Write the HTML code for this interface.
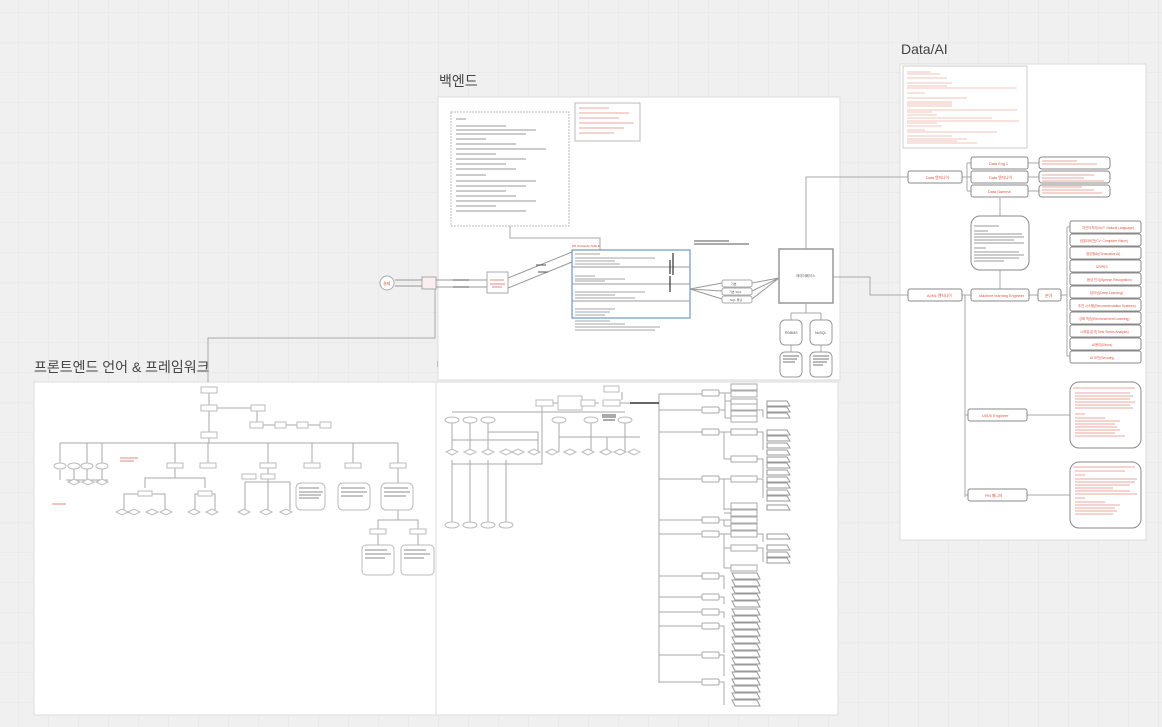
<!DOCTYPE html>
<html><head><meta charset="utf-8"><style>
html,body{margin:0;padding:0;width:1162px;height:727px;overflow:hidden;background:#f0f0f0}
svg{display:block}
.t{font-family:"Liberation Sans","Noto Sans CJK KR",sans-serif}
</style></head><body>
<svg width="1162" height="727" viewBox="0 0 1162 727" xmlns="http://www.w3.org/2000/svg" class="t">
<defs>
<pattern id="g" width="30" height="30" patternUnits="userSpaceOnUse" x="18" y="12">
<path d="M0 0H30M0 0V30" stroke="#e5e5e5" stroke-width="1" fill="none"/>
</pattern>
</defs>
<rect width="1162" height="727" fill="#f0f0f0"/>
<rect width="1162" height="727" fill="url(#g)"/>

<text x="439" y="86" font-size="14" fill="#444">백엔드</text>
<text x="901" y="54" font-size="14" fill="#444">Data/AI</text>
<text x="34" y="372" font-size="14" fill="#444">프론트엔드 언어 &amp; 프레임워크</text>
<text x="436" y="372" font-size="14" fill="#444">백엔드 언어 &amp; 프레임워크</text>

<rect x="438" y="97" width="402" height="283" fill="#fff" stroke="#ddd"/>
<rect x="34" y="382" width="402" height="333" fill="#fff" stroke="#ddd"/>
<rect x="436" y="382" width="402" height="333" fill="#fff" stroke="#ddd"/>
<rect x="900" y="64" width="246" height="476" fill="#fff" stroke="#ddd"/>

<g stroke="#aaa" fill="none" stroke-width="1">
<path d="M435 289V338H208V382"/>
<path d="M806 249V177H908"/>
<path d="M833 277H870V295H908"/>
</g>

<rect x="451" y="112" width="118" height="114" fill="#fff" stroke="#bbb" stroke-dasharray="2 1"/>
<g stroke="#777" stroke-width="0.8">
<path d="M456 119h10M456 126h50M456 130h80M456 134h70M456 139h30M456 144h60M456 149h90M456 154h40M456 159h70M456 164h50M456 169h60M456 175h30M456 181h80M456 186h70M456 191h50M456 196h60M456 201h80M456 206h40M456 211h70"/>
</g>
<path d="M510 226V238H600V250" stroke="#aaa" fill="none"/>
<rect x="575" y="103" width="65" height="38" fill="#fff" stroke="#bbb"/>
<g stroke="#e58a7c" stroke-width="0.8"><path d="M579 108h30M579 113h50M579 118h40M579 123h55M579 128h45M579 133h35"/></g>
<circle cx="387" cy="283" r="7" fill="#fff" stroke="#aaa"/>
<text x="383" y="285" font-size="4" fill="#e0533f">결제</text>
<rect x="422" y="277" width="14" height="12" fill="#fbeeee" stroke="#aaa"/>
<rect x="487" y="272" width="21" height="21" fill="#fff" stroke="#aaa"/>
<g stroke="#e58a7c"><path d="M490 280h14M490 284h15M492 287h10"/></g>
<g stroke="#999" fill="none">
<path d="M395 280h27M395 286h27M436 280h51M436 287h51M508 278l64-26M508 288l64-26"/>
<path d="M690 289l32-6M690 289l32 2M690 289l32 10M752 283l27-5M752 291l27-13M752 299l27-21"/>
</g>
<g stroke="#555"><path d="M453 280h16M453 287h16M536 265h10M538 272h10"/></g>
<text x="572" y="247" font-size="3" fill="#e0533f">DB SCHEMA TABLE</text>
<rect x="572" y="250" width="118" height="68" fill="#fff" stroke="#6a9ac4" stroke-width="1.2"/>
<g stroke="#999"><path d="M572 267h118M572 284h118M572 301h118"/></g>
<g stroke="#888" stroke-width="0.8"><path d="M575 254h25M575 258h80M575 261h40M575 264h45M575 276h20M575 279h50M575 281h30M575 292h70M575 295h40M575 298h60M575 309h40M575 312h35M575 315h30M575 321h35M575 324h50M575 327h85M575 330h80"/></g>
<g stroke="#333" stroke-width="1.2"><path d="M670 260v14M673 253v22M670 276v16"/></g>
<g stroke="#555"><path d="M694 241h35M694 244h55"/></g>
<rect x="722" y="280" width="30" height="7" rx="2" fill="#fff" stroke="#aaa"/>
<rect x="722" y="288" width="30" height="7" rx="2" fill="#fff" stroke="#aaa"/>
<rect x="722" y="296" width="30" height="7" rx="2" fill="#fff" stroke="#aaa"/>
<text x="731" y="285" font-size="3" fill="#555">기본</text><text x="729" y="293" font-size="3" fill="#555">기본 SQL</text><text x="730" y="301" font-size="3" fill="#555">SQL 튜닝</text>
<rect x="779" y="249" width="54" height="54" fill="#fff" stroke="#999" stroke-width="1.5"/>
<text x="796" y="277" font-size="3.5" fill="#555">데이터베이스</text>
<path d="M806 303V313M791 313H821M791 313V320M821 313V320M791 345V352M821 345V352" stroke="#aaa" fill="none"/>
<rect x="780" y="320" width="22" height="25" rx="5" fill="#fff" stroke="#999"/>
<rect x="810" y="320" width="22" height="25" rx="5" fill="#fff" stroke="#999"/>
<text x="785" y="334" font-size="3.5" fill="#555">RDBMS</text><text x="815" y="334" font-size="3.5" fill="#555">NoSQL</text>
<rect x="780" y="352" width="22" height="25" rx="5" fill="#fff" stroke="#999"/>
<rect x="810" y="352" width="22" height="25" rx="5" fill="#fff" stroke="#999"/>
<g stroke="#777"><path d="M783 356h16M783 359h14M783 362h12M813 356h16M813 359h16M813 362h14M813 365h10"/></g>

<rect x="903" y="66" width="124" height="82" fill="#fff" stroke="#ccc"/>
<g stroke="#e58a7c" stroke-width="0.6"><path d="M907 72h24M907 74h33M907 78h40M907 83h45M907 86h40M907 88h110M907 93h18M907 98h60M907 102h45M907 104h45M907 106h45M907 110h110M907 112h25M907 115h30M907 118h85M907 121h112M907 123h30M907 126h35M907 130h18M907 132h90M907 136h45M907 139h60M907 141h50M907 143h70"/></g>
<g stroke="#aaa" fill="none">
<path d="M962 177h5M967 163v28M967 163h4M967 177h4M967 191h4M1028 163h11M1028 177h11M1028 191h11"/>
<path d="M1000 198v91M962 295h9M1029 295h9M1061 295h6M1067 227v129M1067 227h3M1067 356h3"/>
<path d="M965 295v202M965 415h3M965 495h3M1027 415h43M1027 495h43"/>
</g>
<g fill="#fff" stroke="#888">
<rect x="908" y="171" width="54" height="12" rx="2"/>
<rect x="971" y="157" width="57" height="12" rx="2"/>
<rect x="971" y="171" width="57" height="12" rx="2"/>
<rect x="971" y="185" width="57" height="12" rx="2"/>
<rect x="1039" y="157" width="71" height="12" rx="3"/>
<rect x="1039" y="171" width="71" height="12" rx="3"/>
<rect x="1039" y="185" width="71" height="12" rx="3"/>
<rect x="971" y="216" width="58" height="54" rx="9"/>
<rect x="908" y="289" width="54" height="12" rx="2"/>
<rect x="971" y="289" width="58" height="12" rx="2"/>
<rect x="1038" y="289" width="23" height="12" rx="2"/>
<rect x="968" y="409" width="59" height="12" rx="2"/>
<rect x="968" y="489" width="59" height="12" rx="2"/>
<rect x="1070" y="382" width="71" height="66" rx="9"/>
<rect x="1070" y="462" width="71" height="66" rx="9"/>
</g>
<g font-size="3.8" fill="#e0533f">
<text x="926" y="179">Data 엔지니어</text>
<text x="989" y="165">Data Eng 1</text>
<text x="989" y="179">Data 엔지니어</text>
<text x="988" y="193">Data Gamma</text>
<text x="927" y="297">AI/ML 엔지니어</text>
<text x="979" y="297">Machine learning Engineer</text>
<text x="1045" y="297">분야</text>
<text x="982" y="417">UI/UX Engineer</text>
<text x="985" y="497">PM 매니저</text>
</g>
<g stroke="#e58a7c" stroke-width="0.7"><path d="M1042 161h35M1042 164h55M1042 175h52M1042 178h42M1042 181h62M1042 187h40M1042 190h52M1042 193h60"/></g>
<g stroke="#777" stroke-width="0.8"><path d="M974 226h25M974 231h14M974 234h48M974 237h50M974 240h40M974 243h50M974 248h12M974 252h45M974 255h50M974 258h45M974 261h30"/></g>
<g fill="#fff" stroke="#888">
<rect x="1070" y="221" width="71" height="12" rx="2"/><rect x="1070" y="234" width="71" height="12" rx="2"/>
<rect x="1070" y="247" width="71" height="12" rx="2"/><rect x="1070" y="260" width="71" height="12" rx="2"/>
<rect x="1070" y="273" width="71" height="12" rx="2"/><rect x="1070" y="286" width="71" height="12" rx="2"/>
<rect x="1070" y="299" width="71" height="12" rx="2"/><rect x="1070" y="312" width="71" height="12" rx="2"/>
<rect x="1070" y="325" width="71" height="12" rx="2"/><rect x="1070" y="338" width="71" height="12" rx="2"/>
<rect x="1070" y="351" width="71" height="12" rx="2"/>
</g>
<g font-size="3.3" fill="#e0533f">
<text x="1082" y="229">자연어처리(NLP: Natural Language)</text>
<text x="1080" y="242">컴퓨터비전(CV: Computer Vision)</text>
<text x="1086" y="255">생성형AI(Generative AI)</text>
<text x="1096" y="268">로보틱스</text>
<text x="1087" y="281">음성 인식(Speech Recognition)</text>
<text x="1090" y="294">딥러닝(Deep Learning)</text>
<text x="1078" y="307">추천 시스템(Recommendation Systems)</text>
<text x="1079" y="320">강화 학습(Reinforcement Learning)</text>
<text x="1080" y="333">시계열 분석(Time Series Analysis)</text>
<text x="1092" y="346">AI윤리(Ethics)</text>
<text x="1090" y="359">AI 보안(Security)</text>
</g>
<g stroke="#e58a7c" stroke-width="0.7"><path d="M1073 388h62M1075 393h55M1075 396h58M1075 399h55M1075 402h60M1075 405h55M1075 408h58M1075 414h10M1075 418h30M1075 421h45M1075 424h40M1075 427h42M1075 430h45M1075 433h40M1075 436h50M1073 467h62M1075 471h50M1075 475h10M1075 479h62M1075 482h60M1075 485h55M1075 488h38M1075 491h55M1075 494h62M1075 498h10M1075 502h30M1075 505h45M1075 508h40M1075 511h42M1075 514h38"/></g>

<g stroke="#aaa" fill="none">
<path d="M659 394V683"/>
<path d="M659 394h43M659 410h43M659 432h43M659 479h43M659 520h43M659 534h43M659 576h43M659 597h43M659 612h43M659 626h43M659 655h43M659 682h43"/>
<path d="M719 393h6V409M725 393h6M725 401h6M719 410h6M725 404v14M725 418h6M719 432h5V459M724 432h7M724 459h7M719 479h5V510M724 479h7M724 509h7M724 513h7"/>
<path d="M719 520h5V526M724 520h7M724 526h7M719 534h5V568M724 534h7M724 548h7M724 568h7"/>
<path d="M719 576h5V589M719 597h5V604M719 612h5V618M719 626h5V653M719 655h5V676M719 682h5V705"/>
<path d="M757 410h6V417M757 432h6V450M757 459h6V478M757 479h6V498M757 534h6V542M757 548h6V562"/>
</g>
<g fill="#fff" stroke="#aaa">
<rect x="702" y="390" width="17" height="6" rx="1"/><rect x="702" y="407" width="17" height="6" rx="1"/>
<rect x="702" y="429" width="17" height="6" rx="1"/><rect x="702" y="476" width="17" height="6" rx="1"/>
<rect x="702" y="517" width="17" height="6" rx="1"/><rect x="702" y="531" width="17" height="6" rx="1"/>
<rect x="702" y="573" width="17" height="6" rx="1"/><rect x="702" y="594" width="17" height="6" rx="1"/>
<rect x="702" y="609" width="17" height="6" rx="1"/><rect x="702" y="623" width="17" height="6" rx="1"/>
<rect x="702" y="652" width="17" height="6" rx="1"/><rect x="702" y="679" width="17" height="6" rx="1"/>
<rect x="731" y="384" width="26" height="6"/><rect x="731" y="391" width="26" height="6"/><rect x="731" y="399" width="26" height="6"/><rect x="731" y="404" width="26" height="6"/><rect x="731" y="411" width="26" height="6"/><rect x="731" y="416" width="26" height="6"/>
<rect x="731" y="429" width="26" height="6"/><rect x="731" y="456" width="26" height="6"/>
<rect x="731" y="476" width="26" height="6"/><rect x="731" y="503" width="26" height="6"/><rect x="731" y="510" width="26" height="6"/>
<rect x="731" y="517" width="26" height="6"/><rect x="731" y="524" width="26" height="6"/>
<rect x="731" y="531" width="26" height="6"/><rect x="731" y="545" width="26" height="6"/><rect x="731" y="565" width="26" height="6"/>
</g>
<g fill="#fff" stroke="#999">
<path d="M732 573h25l3 6h-25zM732 580h25l3 6h-25zM732 587h25l3 6h-25zM732 594h25l3 6h-25zM732 601h25l3 6h-25zM732 609h25l3 6h-25zM732 616h25l3 6h-25zM732 623h25l3 6h-25zM732 630h25l3 6h-25zM732 637h25l3 6h-25zM732 644h25l3 6h-25zM732 651h25l3 6h-25zM732 658h25l3 6h-25zM732 665h25l3 6h-25zM732 672h25l3 6h-25zM732 679h25l3 6h-25zM732 686h25l3 6h-25zM732 693h25l3 6h-25zM732 700h25l3 6h-25z"/>
<path d="M767 401h20l3 5h-23zM767 407h20l3 5h-23zM767 413h20l3 5h-23zM767 430h20l3 5h-23zM767 436h20l3 5h-23zM767 443h20l3 5h-23zM767 450h20l3 5h-23zM767 457h20l3 5h-23zM767 463h20l3 5h-23zM767 470h20l3 5h-23zM767 477h20l3 5h-23zM767 483h20l3 5h-23zM767 490h20l3 5h-23zM767 496h20l3 5h-23zM767 505h20l3 5h-23zM767 534h20l3 5h-23zM767 545h20l3 5h-23zM767 552h20l3 5h-23zM767 558h20l3 5h-23z"/>
</g>
<g stroke="#aaa" fill="none">
<path d="M452 412H625M452 420V452M470 420V452M488 420V452M559 420V452M591 420V452M625 420V452M452 440H538M559 437H640M488 432H538V452M607 437V452"/>
<path d="M452 460V525M470 460V525M488 460V525M506 460V525M452 464H542V402"/>
<path d="M553 403h12M587 403h12M618 403h12M622 392V400"/>
</g>
<path d="M630 403H659" stroke="#333" stroke-width="1.5"/>
<g fill="#fff" stroke="#bbb">
<rect x="536" y="400" width="17" height="6"/><rect x="558" y="396" width="24" height="14"/><rect x="581" y="400" width="14" height="6"/>
<rect x="603" y="400" width="17" height="6"/><rect x="604" y="386" width="15" height="6"/>
<ellipse cx="452" cy="420" rx="7" ry="3"/><ellipse cx="470" cy="420" rx="7" ry="3"/><ellipse cx="488" cy="420" rx="7" ry="3"/>
<ellipse cx="559" cy="420" rx="7" ry="3"/><ellipse cx="591" cy="420" rx="7" ry="3"/><ellipse cx="625" cy="420" rx="7" ry="3"/>
<ellipse cx="452" cy="525" rx="7" ry="3"/><ellipse cx="470" cy="525" rx="7" ry="3"/><ellipse cx="488" cy="525" rx="7" ry="3"/><ellipse cx="506" cy="525" rx="7" ry="3"/>
</g>
<g fill="#fff" stroke="#bbb">
<path d="M446 452l6-3 6 3-6 3zM464 452l6-3 6 3-6 3zM482 452l6-3 6 3-6 3zM500 452l6-3 6 3-6 3zM512 452l6-3 6 3-6 3zM528 452l6-3 6 3-6 3zM546 452l6-3 6 3-6 3zM564 452l6-3 6 3-6 3zM582 452l6-3 6 3-6 3zM600 452l6-3 6 3-6 3zM614 452l6-3 6 3-6 3zM628 452l6-3 6 3-6 3z"/>
</g>
<g stroke="#555"><path d="M602 415h14M602 417h14M603 420h12"/></g>

<g stroke="#aaa" fill="none">
<path d="M209 393V405M215 408H251M257 411V422M263 425H275M286 425H297M308 425H320M209 411V432M209 438V443M60 443H398"/>
<path d="M60 443V463M87 443V463M102 443V463M175 443V463M208 443V463M268 443V463M312 443V463M353 443V463M398 443V463"/>
<path d="M74 467V480M87 467V480M102 467V480M60 470V480M66 480H108"/>
<path d="M175 468V478H145V488M175 478H205V488M145 494H124V510M145 494H165V510M205 494H195V510M205 494H215V510"/>
<path d="M268 468V482M245 482H290M245 482V510M268 482V510M290 482V510"/>
<path d="M398 468V520H378V545M398 520H418V545"/>
</g>
<g fill="#fff" stroke="#bbb">
<rect x="201" y="387" width="16" height="6"/><rect x="201" y="405" width="16" height="6"/><rect x="251" y="405" width="14" height="6"/>
<rect x="250" y="422" width="13" height="6"/><rect x="275" y="422" width="11" height="6"/><rect x="297" y="422" width="11" height="6"/><rect x="320" y="422" width="11" height="6"/>
<rect x="201" y="432" width="16" height="6"/>
<ellipse cx="60" cy="466" rx="6" ry="3"/><ellipse cx="74" cy="466" rx="6" ry="3"/><ellipse cx="87" cy="466" rx="6" ry="3"/><ellipse cx="102" cy="466" rx="6" ry="3"/>
<rect x="167" y="463" width="16" height="5"/><rect x="200" y="463" width="16" height="5"/><rect x="260" y="463" width="16" height="5"/><rect x="304" y="463" width="16" height="5"/><rect x="345" y="463" width="16" height="5"/><rect x="390" y="463" width="16" height="5"/>
<rect x="138" y="491" width="14" height="5"/><rect x="198" y="491" width="14" height="5"/>
<rect x="242" y="474" width="14" height="5"/><rect x="261" y="474" width="14" height="5"/>
<rect x="296" y="483" width="29" height="27" rx="5"/><rect x="338" y="483" width="32" height="27" rx="5"/><rect x="381" y="483" width="32" height="27" rx="5"/>
<rect x="370" y="529" width="16" height="5"/><rect x="410" y="529" width="16" height="5"/>
<rect x="362" y="545" width="32" height="30" rx="4"/><rect x="401" y="545" width="33" height="30" rx="4"/>
<path d="M68 482l6-3 6 3-6 3zM82 482l6-3 6 3-6 3zM96 482l6-3 6 3-6 3zM116 512l6-3 6 3-6 3zM128 512l6-3 6 3-6 3zM146 512l6-3 6 3-6 3zM160 512l6-3 6 3-6 3zM188 512l6-3 6 3-6 3zM206 512l6-3 6 3-6 3zM238 512l6-3 6 3-6 3zM260 512l6-3 6 3-6 3zM280 512l6-3 6 3-6 3z"/>
</g>
<g stroke="#e58a7c"><path d="M120 458h18M120 461h14M52 504h14"/></g>
<g stroke="#666" stroke-width="0.8"><path d="M299 488h20M299 492h24M299 495h22M299 498h20M341 488h24M341 492h26M341 496h22M384 488h24M384 492h26M384 496h22M365 550h22M365 554h26M365 558h20M404 550h22M404 554h26M404 558h20"/></g>
</svg>
</body></html>
